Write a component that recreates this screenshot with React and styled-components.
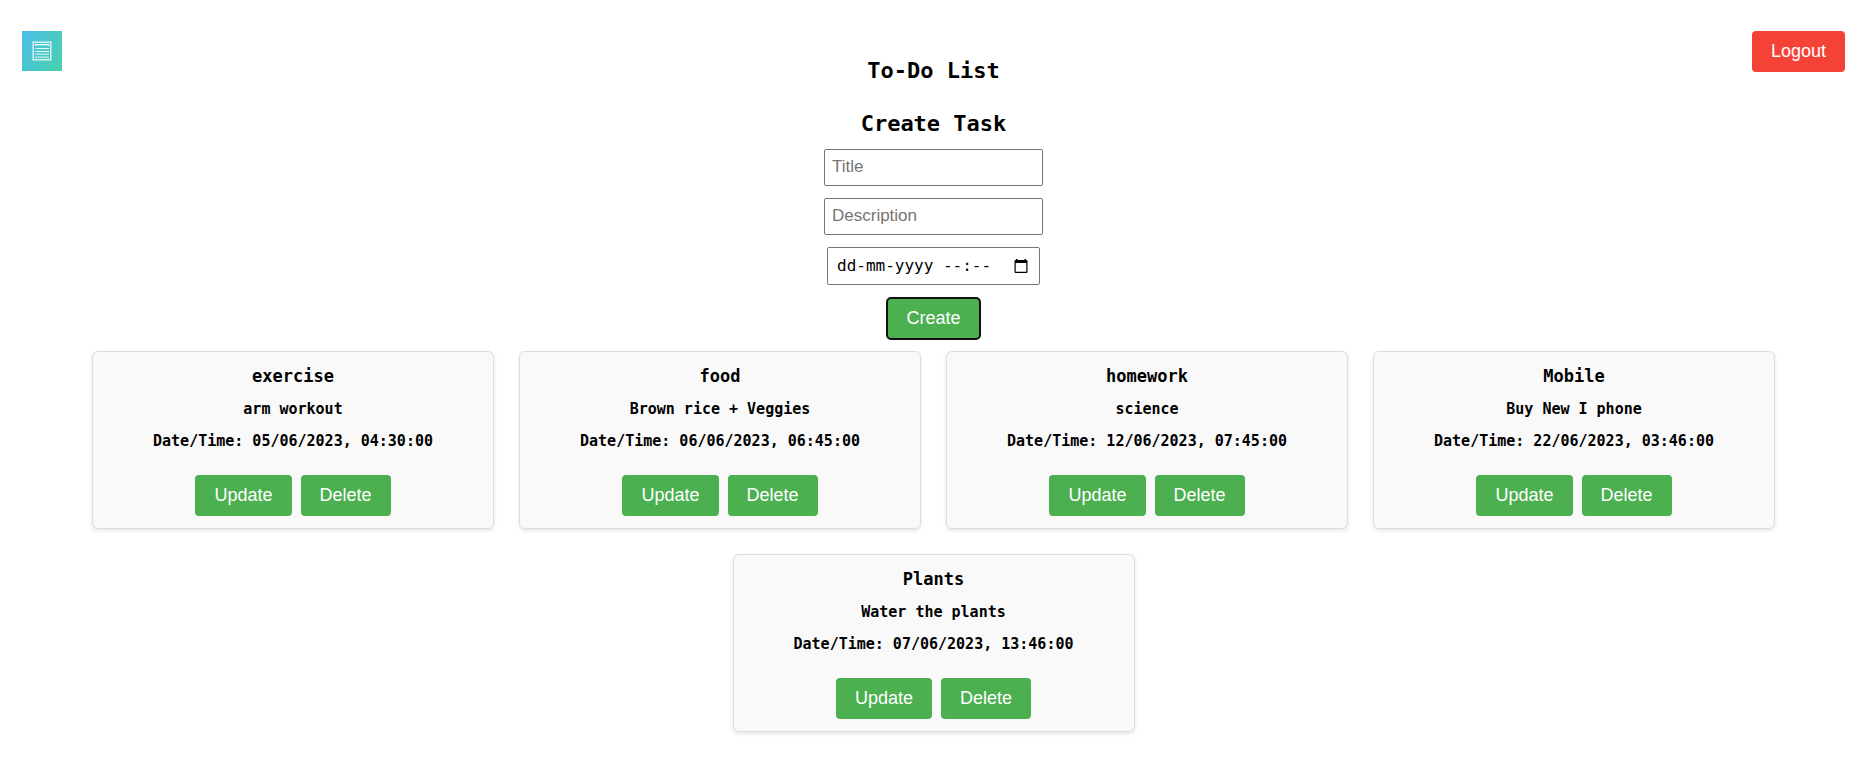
import React from "react";
import styled, { createGlobalStyle, css } from "styled-components";

const mono = '"DejaVu Sans Mono", monospace';
const sans = '"Liberation Sans", Arial, sans-serif';

const GlobalStyle = createGlobalStyle`
  *, *::before, *::after {
    box-sizing: border-box;
  }

  body {
    margin: 0;
    background: #fff;
    color: #000;
    font-family: ${mono};
  }
`;

const Page = styled.div`
  padding: 31px 28px 40px 22px;
`;

const Header = styled.header`
  display: grid;
  grid-template-columns: 1fr auto 1fr;
  align-items: start;
`;

const LogoLink = styled.a`
  display: block;
  justify-self: start;
  width: 40px;
  height: 40px;
`;

const Heading = styled.h2`
  margin: 27px 0 0;
  font-size: 22px;
  line-height: 26px;
  font-weight: 700;
  text-align: center;
`;

const Button = styled.button`
  padding: 10px 19px;
  border: 0;
  border-radius: 4px;
  background: ${({ $danger }) => ($danger ? "#f44336" : "#4caf50")};
  color: #fff;
  font-family: ${sans};
  font-size: 18px;
  line-height: 21px;
  cursor: pointer;

  ${({ $focused }) =>
    $focused &&
    css`
      outline: 2px solid #101010;
      outline-offset: -1px;
    `}
`;

const LogoutButton = styled(Button)`
  justify-self: end;
`;

const TaskForm = styled.form`
  display: flex;
  flex-direction: column;
  align-items: center;
`;

const Fields = styled.div`
  display: flex;
  flex-direction: column;
  align-items: center;
  gap: 12px;
  margin: 12px 0 13px;
`;

const fieldFrame = css`
  border: 1px solid #767676;
  border-radius: 2px;
  background: #fff;
`;

const TextField = styled.input`
  ${fieldFrame}
  width: 219px;
  padding: 7px 7px 8px;
  font-family: ${sans};
  font-size: 17px;
  line-height: 20px;

  &::placeholder {
    color: #757575;
  }
`;

const DateField = styled.div`
  ${fieldFrame}
  display: flex;
  align-items: center;
  justify-content: space-between;
  width: 213px;
  padding: 8px 11px 8px 9px;
`;

const DateInput = styled.input`
  flex: 1;
  min-width: 0;
  height: 20px;
  padding: 0;
  border: 0;
  outline: 0;
  background: none;
  font-family: ${mono};
  font-size: 16px;
  line-height: 20px;

  &::placeholder {
    color: #000;
  }
`;

const PickerButton = styled.button`
  display: flex;
  padding: 0;
  border: 0;
  background: none;
  cursor: pointer;
`;

const TaskList = styled.main`
  display: flex;
  flex-wrap: wrap;
  justify-content: center;
  gap: 25px;
  margin-top: 12px;
`;

const Card = styled.article`
  width: 402px;
  max-width: 100%;
  padding: 13px 12px 12px;
  border: 1px solid #ddd;
  border-radius: 6px;
  background: #f9f9f9;
  box-shadow: 0 2px 4px rgba(0, 0, 0, 0.1);
  text-align: center;
`;

const CardTitle = styled.h3`
  margin: 0;
  font-size: 17px;
  line-height: 22px;
`;

const CardText = styled.p`
  margin: 12px 0 0;
  font-size: 15px;
  line-height: 20px;
  font-weight: 700;
`;

const CardActions = styled.div`
  display: flex;
  justify-content: center;
  gap: 9px;
  margin-top: 24px;
`;

const tasks = [
  { title: "exercise", description: "arm workout", date: "05/06/2023, 04:30:00" },
  { title: "food", description: "Brown rice + Veggies", date: "06/06/2023, 06:45:00" },
  { title: "homework", description: "science", date: "12/06/2023, 07:45:00" },
  { title: "Mobile", description: "Buy New I phone", date: "22/06/2023, 03:46:00" },
  { title: "Plants", description: "Water the plants", date: "07/06/2023, 13:46:00" },
];

function Logo() {
  return (
    <svg width="40" height="40" viewBox="0 0 40 40" aria-hidden="true">
      <defs>
        <linearGradient id="logo-fill" x1="0" y1="0.2" x2="1" y2="0.8">
          <stop offset="0" stopColor="#4bbfe6" />
          <stop offset="1" stopColor="#48d0ae" />
        </linearGradient>
      </defs>
      <rect width="40" height="40" fill="url(#logo-fill)" />
      <g fill="none" stroke="#fff">
        <rect x="10.5" y="10.5" width="19" height="19" strokeOpacity="0.4" />
        <rect x="11.5" y="11.5" width="17" height="17" strokeOpacity="0.75" />
        <path d="M13 13.5h14" strokeOpacity="0.95" />
        <path d="M13 14.5h1M26 14.5h1" strokeOpacity="0.95" />
        <path d="M14 14.5h12" strokeOpacity="0.3" />
        <path d="M13 17.5h2M13 20.5h2" strokeOpacity="0.6" />
        <path d="M15 17.5h12M15 20.5h12" strokeOpacity="0.9" />
        <path d="M13 23.5h14M13 26.5h14" strokeOpacity="0.55" />
        <path d="M13 22.5h14M13 25.5h14" strokeOpacity="0.3" />
      </g>
    </svg>
  );
}

function CalendarIcon() {
  return (
    <svg width="14" height="14" viewBox="0 0 14 14" aria-hidden="true">
      <path
        d="M2 0h1.500v1h7V0H12v1h.5a1 1 0 0 1 1 1v11a1 1 0 0 1-1 1h-11a1 1 0 0 1-1-1V2a1 1 0 0 1 1-1H2zM1.700 4v8.800h10.600V4z"
        fillRule="evenodd"
        fill="#000"
      />
    </svg>
  );
}

function TaskCard({ task }) {
  return (
    <Card>
      <CardTitle>{task.title}</CardTitle>
      <CardText>{task.description}</CardText>
      <CardText>Date/Time: {task.date}</CardText>
      <CardActions>
        <Button type="button">Update</Button>
        <Button type="button">Delete</Button>
      </CardActions>
    </Card>
  );
}

export default function App() {
  return (
    <>
      <GlobalStyle />
      <Page>
        <Header>
          <LogoLink href="#" aria-label="Home">
            <Logo />
          </LogoLink>
          <Heading as="h1">To-Do List</Heading>
          <LogoutButton type="button" $danger>
            Logout
          </LogoutButton>
        </Header>
        <TaskForm onSubmit={(event) => event.preventDefault()}>
          <Heading>Create Task</Heading>
          <Fields>
            <TextField type="text" placeholder="Title" aria-label="Title" />
            <TextField type="text" placeholder="Description" aria-label="Description" />
            <DateField>
              <DateInput type="text" placeholder="dd-mm-yyyy --:--" aria-label="Date and time" />
              <PickerButton type="button" aria-label="Open calendar">
                <CalendarIcon />
              </PickerButton>
            </DateField>
          </Fields>
          <Button type="submit" $focused>
            Create
          </Button>
        </TaskForm>
        <TaskList>
          {tasks.map((task) => (
            <TaskCard key={task.title} task={task} />
          ))}
        </TaskList>
      </Page>
    </>
  );
}
